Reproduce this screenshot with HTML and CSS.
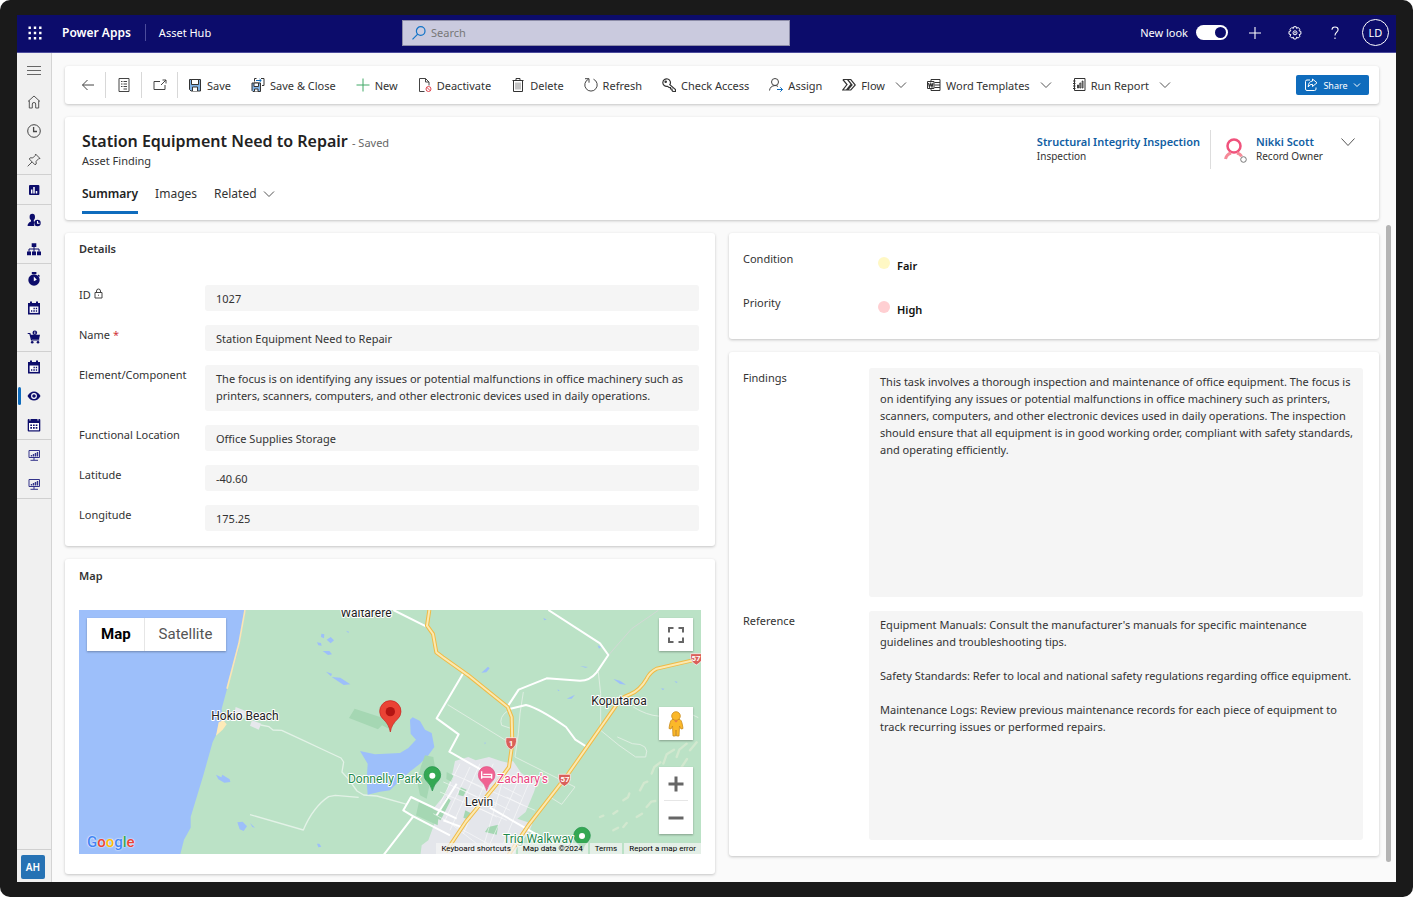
FILE: index.html
```html
<!DOCTYPE html>
<html lang="en">
  <head>
    <meta charset="UTF-8" />
    <meta name="viewport" content="width=device-width, initial-scale=1.0" />
    <title>Asset Hub - Power Apps</title>
    <link rel="stylesheet" href="styles.css">
  </head>
  <body>
    <div class="device">
      <header class="topbar">
        <div class="brand">
          <button class="waffle" aria-label="App launcher">
            <svg width="14" height="14" viewBox="0 0 14 14" fill="#fff">
              <path d="M.5.5h2.400v2.400H.5zM5.800.5h2.400v2.400H5.800zM11.100.5h2.400v2.400h-2.400zM.5 5.800h2.400v2.400H.5zM5.800 5.800h2.400v2.400H5.800zM11.100 5.800h2.400v2.400h-2.400zM.5 11.100h2.400v2.400H.5zM5.800 11.100h2.400v2.400H5.800zM11.100 11.100h2.400v2.400h-2.400z" />
            </svg>
          </button>
          <a class="product" href="#">Power Apps</a>
          <a class="app" href="#">Asset Hub</a>
        </div>
        <div class="search">
          <svg width="14" height="14" viewBox="0 0 14 14" fill="none" stroke="#1173c7" stroke-width="1.2">
            <circle cx="8.700" cy="5" r="4.300" />
            <path d="M5.700 8.200L.5 13.400" />
          </svg>
          <input type="text" placeholder="Search" aria-label="Search" />
        </div>
        <div class="tools">
          <label for="newLook">New look</label>
          <input type="checkbox" id="newLook" class="toggle" checked />
          <button aria-label="Add">
            <svg width="14" height="14" viewBox="0 0 14 14" stroke="#fff" stroke-width="1.1"><path d="M7 1v12M1 7h12" /></svg>
          </button>
          <button aria-label="Settings">
            <svg width="14" height="14" viewBox="0 0 14 14" fill="none" stroke="#fff" stroke-linejoin="round">
              <path d="M5.800 .7h2.400l.4 1.700 1.500-.9 1.900 1.800-1 1.500 1.900.6v2.700l-1.800.5.9 1.600-1.800 1.900-1.600-1-.5 1.900H5.800l-.4-1.800-1.600.9L2 10.300l.9-1.700L1 8.100V5.400l1.900-.5L2 3.300l1.800-1.800 1.600.9z" />
              <circle cx="7" cy="6.800" r="2" />
              <circle cx="7" cy="6.800" r=".4" />
            </svg>
          </button>
          <button aria-label="Help">
            <svg width="10" height="14" viewBox="0 0 10 14" fill="none" stroke="#fff" stroke-width="1.100">
              <path d="M2 3.800C2 2 3.200 1 5 1s3.100 1.100 3.100 2.700C8.100 6 5 6.300 5 9.400" />
              <path d="M5 11.500v1.600" />
            </svg>
          </button>
          <button class="avatar">LD</button>
        </div>
      </header>

      <div class="body">
        <nav class="sidebar">
          <button class="menu" aria-label="Menu">
            <svg width="14" height="10" viewBox="0 0 14 10" stroke="#666"><path d="M0 1.500h14M0 5.500h14M0 9.500h14" /></svg>
          </button>
          <div class="group">
            <a href="#" aria-label="Home"><svg width="14" height="14" viewBox="0 0 14 14" fill="none" stroke="#555"><path d="M1 6.500L7 1l6 5.500M2.300 5.500V13H5.300V9q0-1.500 1.700-1.500T8.700 9v4h3V5.500" /></svg></a>
            <a href="#" aria-label="Recent"><svg width="14" height="14" viewBox="0 0 14 14" fill="none" stroke="#444"><circle cx="7" cy="7" r="6.300" /><path d="M6.600 3v4.500h3.400" stroke-width="1.300" /></svg></a>
            <a href="#" aria-label="Pinned"><svg width="14" height="14" viewBox="0 0 14 14" fill="none" stroke="#555"><path d="M8.500 1l4.500 4.500-1.300.2-2.600 2.600.1 2.700-1.200.8L2.300 6l.9-1.200 2.600.1 2.600-2.600zM5 9L.7 13.300" /></svg></a>
          </div>
          <div class="group">
            <a href="#" aria-label="Dashboards"><svg width="14" height="14" viewBox="0 0 14 14"><rect x="2" y="2" width="10.400" height="10" rx="1" fill="#0c0c6b" /><path d="M4.700 6.500v4M7 4v6.500M9.500 8v2.500" stroke="#fff" stroke-width="1.500" /></svg></a>
          </div>
          <div class="group">
            <a href="#" aria-label="Customers"><svg width="14" height="14" viewBox="0 0 14 14" fill="#0c0c6b"><ellipse cx="5.300" cy="4" rx="2.700" ry="3.300" /><path d="M.6 13q-.2-3 3.400-4.500V6h2.800v2.500l1 .5Q6 11 7.300 13z" /><circle cx="10.500" cy="10" r="3.200" /><path d="M10.500 8v2.200h2" stroke="#fff" stroke-width="1.100" fill="none" /></svg></a>
            <a href="#" aria-label="Hierarchy"><svg width="14" height="14" viewBox="0 0 14 14" fill="#0c0c6b"><path d="M4.700 1.300h4.600v3.600H4.700zM0 9.500h4v3.700H0zM5 9.500h4v3.700H5zM10 9.500h4v3.700h-4z" /><path d="M7 5v5M2 9.800V7h10v2.800" fill="none" stroke="#0c0c6b" /></svg></a>
          </div>
          <div class="group">
            <a href="#" aria-label="Timers"><svg width="14" height="14" viewBox="0 0 14 14" fill="#0c0c6b"><path d="M4.800 0h4.600v2H4.800z" /><circle cx="7" cy="8" r="5.700" /><path d="M11 3l1.500 1.500" stroke="#0c0c6b" stroke-width="1.500" /><path d="M6.800 4.500l3 3.300-3 1.500z" fill="#fff" /></svg></a>
            <a href="#" aria-label="Schedule"><svg width="14" height="14" viewBox="0 0 14 14"><path d="M1 2h2V.6h2V2h4V.6h2V2h2v11.500H1z" fill="#0c0c6b" /><path d="M2.600 5.500h8.800v6.400H2.600z" fill="#fff" /><path d="M6.500 7.500h1.300m1 0h1.300M4 10h1.300m1 0h1.500m1 0h1.300" stroke="#0c0c6b" stroke-width="1.500" /></svg></a>
            <a href="#" aria-label="Orders"><svg width="14" height="14" viewBox="0 0 14 14" fill="#0c0c6b"><path d="M.7 3.500h2.200L4.500 10h7.700" fill="none" stroke="#0c0c6b" stroke-width="1.200" /><path d="M3.400 4.700H13l-1 4.800H4.500z" /><circle cx="7.800" cy="2.800" r="2.300" /><path d="M7.800 1.500v2.600" stroke="#fff" stroke-width=".8" /><circle cx="5.200" cy="12.300" r="1.300" /><circle cx="11" cy="12.300" r="1.300" /></svg></a>
          </div>
          <div class="group">
            <a href="#" aria-label="Calendar"><svg width="14" height="14" viewBox="0 0 14 14"><path d="M1 2h2V.6h2V2h4V.6h2V2h2v11.500H1z" fill="#0c0c6b" /><path d="M2.600 5.500h8.800v6.400H2.600z" fill="#fff" /><path d="M6.500 7.500h1.300m1 0h1.300M4 10h1.300m1 0h1.500m1 0h1.300" stroke="#0c0c6b" stroke-width="1.500" /></svg></a>
            <a href="#" class="current" aria-label="Findings"><svg width="14" height="14" viewBox="0 0 14 14"><path d="M.5 7Q3 2.500 7 2.500T13.500 7Q11 11.500 7 11.500T.5 7z" fill="#0c0c6b" /><circle cx="7" cy="7" r="2.900" fill="#fff" /><circle cx="7" cy="7" r="1.800" fill="#0c0c6b" /></svg></a>
            <a href="#" aria-label="Plans"><svg width="14" height="14" viewBox="0 0 14 14"><rect x=".7" y="1" width="12.600" height="12.500" rx="1" fill="#0c0c6b" /><path d="M2 5h10v7.300H2z" fill="#fff" /><path d="M3 0v2.600M11 0v2.600" stroke="#f0f0f0" /><path d="M3.300 7.300h1.700m1 0h1.700m1 0h1.700M3.300 9.900h1.700m1 0h1.700m1 0h1.700" stroke="#0c0c6b" stroke-width="1.600" /></svg></a>
          </div>
          <div class="group">
            <a href="#" aria-label="Reports"><svg width="14" height="14" viewBox="0 0 14 14" fill="none" stroke="#33338a"><path d="M2 2.500h10.500v7H2zM7 9.500v2.500M3.500 12.300h7.500" /><path d="M4.500 8.500V7M6.500 8.500V6M8.500 8.500V5M10.500 8.500V4" stroke-width="1.400" /></svg></a>
            <a href="#" aria-label="Analytics"><svg width="14" height="14" viewBox="0 0 14 14" fill="none" stroke="#33338a"><path d="M2 2.500h10.500v7H2zM7 9.500v2.500M3.500 12.300h7.500" /><path d="M4.500 8.500V7M6.500 8.500V6M8.500 8.500V5M10.500 8.500V4" stroke-width="1.400" /></svg></a>
          </div>
          <div class="area"><button>AH</button></div>
        </nav>

        <main class="main">
          <div class="card commands">
            <div class="nav-cmds">
              <button aria-label="Back"><svg width="14" height="14" viewBox="0 0 14 14" fill="none" stroke="#444"><path d="M13 7H1.500M6.500 2L1.500 7l5 5" /></svg></button>
              <button aria-label="Record list"><svg width="14" height="14" viewBox="0 0 14 14" fill="none" stroke="#444"><path d="M2 .5h10v13H2zM4 3.500h1.500M6.500 3.500H10M4 6h1.500M6.500 6H10M4 8.500h1.500M6.500 8.500H10M6.500 11H10" /></svg></button>
              <button aria-label="Open in new window"><svg width="14" height="14" viewBox="0 0 14 14" fill="none" stroke="#444"><path d="M7 3.500H1v8h11V7M8 7l5-5M9.500 2H13v3.500" /></svg></button>
            </div>
            <div class="record-cmds">
              <button><svg width="14" height="14" viewBox="0 0 14 14" fill="none" stroke="#333"><path d="M1.500 1.500h11v11.500H3L1.500 11.500z" fill="#81b3e6" /><path d="M3.500 1.500h7v5h-7z" fill="#fff" /><path d="M4.500 13V9h5v4" fill="#fff" /></svg>Save</button>
              <button><svg width="14" height="14" viewBox="0 0 14 14" fill="none" stroke="#333"><path d="M1 5h8.500v8.500H2L1 12.500z" fill="#81b3e6" /><path d="M3 5h4.500v3.500H3zM3.500 13.500v-2.500h3.500v2.500" fill="#fff" /><path d="M3.500 3.500v-3h2M10 .5h3v7h-2" /><path d="M5 2.500h5M8.500 1l1.800 1.500L8.500 4" stroke="#0f6cbd" /></svg>Save &amp; Close</button>
              <button><svg width="14" height="14" viewBox="0 0 14 14" stroke="#41a866"><path d="M7 .5v13M.5 7h13" /></svg>New</button>
              <button><svg width="14" height="14" viewBox="0 0 14 14" fill="none" stroke="#444"><path d="M6.500 13.500H1.500v-13h6l3.500 3.500v3.500M7.500.5V4H11" /><g stroke="#e0454f"><circle cx="10.500" cy="11" r="2.500" /><path d="M8.800 9.300l3.400 3.400" /></g></svg>Deactivate</button>
              <button><svg width="14" height="14" viewBox="0 0 14 14" fill="none" stroke="#333"><path d="M1.500 2.500h11M5 2.500v-2h4v2M2.500 2.500v11h9v-11" /><path d="M5 4.500v7M7 4.500v7M9 4.500v7" stroke="#888" /></svg>Delete</button>
              <button><svg width="14" height="14" viewBox="0 0 14 14" fill="none" stroke="#444"><path d="M9.500 1.200A6.200 6.200 0 1 1 4.500 1.200M1 .7h4v4" /></svg>Refresh</button>
              <button><svg width="14" height="14" viewBox="0 0 14 14" fill="none" stroke="#333" stroke-width="1.200"><path d="M7.800 6.700A3.800 3.800 0 1 0 5.500 8.300L7 9.500h1.500V11H10v1.500l1 1h2.500v-2z" /><circle cx="3.700" cy="3.800" r=".7" /></svg>Check Access</button>
              <button><svg width="14" height="14" viewBox="0 0 14 14" fill="none" stroke="#444"><circle cx="6" cy="4" r="3.500" /><path d="M.5 12.500Q1 8 6 7.500q2 0 3 1" /><path d="M8 11.500h5.500M11.300 9.300l2.200 2.200-2.200 2.200" stroke="#0f6cbd" /></svg>Assign</button>
              <button><svg width="14" height="14" viewBox="0 0 14 14" fill="none" stroke="#333" stroke-width="1.200"><path d="M.8 1.500h8l4.500 5.500-4.500 5H5.500L10 7 5.500 1.500M.8 1.500L5 6.500l-4.200 5.500h3.700L9 6.500" /></svg>Flow<svg class="chev" width="12" height="12" viewBox="0 0 12 12"><path d="M1 3.500l5 5 5-5" /></svg></button>
              <button><svg width="14" height="14" viewBox="0 0 14 14" fill="none" stroke="#333"><path d="M4 3.500v-2h9v11H4v-2M7.500 4.500H13M7.500 7H13M7.500 9.500H13" /><path d="M.5 3.500h6.500v7H.5z" /><path d="M1.500 5l1 4 1.300-3.500L5 9l1-4" stroke-width="1.200" /></svg>Word Templates<svg class="chev" width="12" height="12" viewBox="0 0 12 12"><path d="M1 3.500l5 5 5-5" /></svg></button>
              <button><svg width="14" height="14" viewBox="0 0 14 14" fill="none" stroke="#333"><path d="M2.500.5h10.500v12H2.500zM1 3h2.500M1 5.500h2.500M1 8h2.500M1 10.500h2.500" /><path d="M5.500 10V7h1v3zM7.800 10V5h1v5zM10.200 10V3h.8v7z" stroke-width=".9" /></svg>Run Report<svg class="chev" width="12" height="12" viewBox="0 0 12 12"><path d="M1 3.500l5 5 5-5" /></svg></button>
            </div>
            <button class="share"><svg width="14" height="14" viewBox="0 0 14 14" fill="none" stroke="#fff" stroke-linejoin="round"><path d="M6 2H3Q1.500 2 1.500 3.500v7.500Q1.500 12.500 3 12.500h7.500q1.500 0 1.500-1.500v-1.500" /><path d="M8.500 1l4.500 3.800L8.500 8.500V6.300Q5.500 6 4.200 9 4.300 3.500 8.500 3z" /></svg>Share<svg width="8" height="8" viewBox="0 0 8 8" fill="none" stroke="#fff"><path d="M1 2.500l3 3 3-3" /></svg></button>
          </div>

          <section class="card record">
            <div class="record-top">
              <div class="record-title">
                <h1>Station Equipment Need to Repair <small>- Saved</small></h1>
                <p>Asset Finding</p>
              </div>
              <div class="lookup">
                <a href="#">Structural Integrity Inspection</a>
                <span>Inspection</span>
              </div>
              <div class="owner">
                <svg width="26" height="28" viewBox="0 0 26 28" fill="none">
                  <circle cx="12" cy="9" r="6.500" stroke="#f0527c" stroke-width="2.500" />
                  <path d="M3.500 22q1-4.500 5.500-6M15 16q3.500 1 4.500 3.500" stroke="#f58a98" stroke-width="3" />
                  <circle cx="21.500" cy="22.500" r="2.800" fill="#fff" stroke="#777" />
                </svg>
                <div class="lookup">
                  <a href="#">Nikki Scott</a>
                  <span>Record Owner</span>
                </div>
              </div>
              <button class="expand" aria-label="Expand header"><svg class="chev" width="14" height="14" viewBox="0 0 14 14"><path d="M.5 3.500l6.500 7 6.500-7" /></svg></button>
            </div>
            <div class="tabs">
              <button class="active">Summary</button>
              <button>Images</button>
              <button>Related<svg class="chev" width="12" height="12" viewBox="0 0 12 12"><path d="M1 3.500l5 5 5-5" /></svg></button>
            </div>
          </section>

          <div class="form">
            <div class="column">
              <section class="card details">
                <h2>Details</h2>
                <div class="fields">
                  <label for="assetId">ID <svg width="9" height="11" viewBox="0 0 9 11" fill="none" stroke="#444"><path d="M1 4.500h7v5.500H1zM2.500 4.500V3q0-2 2-2t2 2v1.500" /><path d="M4 7.200h1" /></svg></label>
                  <input type="text" id="assetId" value="1027" readonly />
                  <label for="assetName">Name <span class="req">*</span></label>
                  <input type="text" id="assetName" value="Station Equipment Need to Repair" />
                  <label for="element">Element/Component</label>
                  <textarea id="element" class="short">The focus is on identifying any issues or potential malfunctions in office machinery such as printers, scanners, computers, and other electronic devices used in daily operations.</textarea>
                  <label for="location">Functional Location</label>
                  <input type="text" id="location" value="Office Supplies Storage" />
                  <label for="lat">Latitude</label>
                  <input type="text" id="lat" value="-40.60" />
                  <label for="lng">Longitude</label>
                  <input type="text" id="lng" value="175.25" />
                </div>
              </section>

              <section class="card map-card">
                <h2>Map</h2>
                <div class="map">
                  <svg class="map-canvas" viewBox="0 0 622 244" preserveAspectRatio="xMidYMid slice">
                    <rect width="622" height="244" fill="#bbe2c6" />
                    <!-- shapes are drawn at three times the map scale -->
                    <g transform="scale(.333333)">
                      <g transform="translate(-27 -29)">
                        <path d="M0 0H532L505 150 470 270 455 325 458 365 440 400 428 425 400 525 362 650 362 682 342 718 330 765H0z" fill="#9dbffa" />
                        <path d="M525 29l-18 100-36 136" fill="none" stroke="#fae6b4" stroke-width="5" />
                        <path d="M446 366l14-6 10 12-12 16-20 18z" fill="#fdeab8" />
                        <path d="M497 320l30 12-3 22-32-8zM546 360l28 10-8 18-26-12z" fill="#e6e8ec" />
                        <g fill="#9dbffa">
                          <path d="M754 100l9 2-1 12-9-4zM770 118l12-8 10 10-10 9zM741 126l12 2 2 8-10-1zM758 152l20 0 8 10-12 2zM768 214l18 6-3 8zM785 230l26 2 30 20-20 2zM828 91l9 3-2 4z" />
                          <path d="M438 523l16 8 3-8 22 14 2 8-18 2-18-10zM502 666l16-2 13 14-10 14-12-5zM540 668l15 14-8-2zM741 730h7l6 9-9 2z" />
                        </g>
                        <path d="M854 325l74 24 50 18-22 18-20-10-12 12-87-34z" fill="#a5d7b3" />
                        <g fill="none" stroke="#e3f2e7" stroke-width="4" stroke-linejoin="round">
                          <path d="M572 374l25 5 12 10 26 1 60 28 60 28 58 27 8 12-5 30 20 22 25 35 20 12 40 3 90 25" />
                          <path d="M540 643l160 46q30-70 76-100l20-4 70 6" />
                        </g>
                      </g>
                      <g transform="translate(903 -29)">
                        <path d="M-60 452L-15 462 60 458 85 443 108 418 92 400 90 358 98 351 120 362 135 388 155 398 163 440 145 465 120 490 95 510 55 545 30 570 0 574-37 583-40 540-37 490z" fill="#9dbffa" />
                        <path d="M135 465l25 5 5 30-10 25-15 70-20-10-8-40 10-45z" fill="#a5d7b3" />
                        <path d="M225 482l40-12 22 10 40-10 35 12 22 5 15-5 14 20 10 15 25 18 24 10-10 30-25 60-25 20 45 15-10 25-30 40-30 50H150l-30-10 5-40 20-15 22-60-20-20 50-60 20-60z" fill="#e4e6eb" />
                        <path d="M200 590l12 10-30 60-15-8zM117 605l60 30-4 40-65-30zM325 680l30-7-5 30-35-8zM240 560l20 8-10 20-15-4zM256 630l20 10-6 20-20-8zM200 515l22 12-8 18-15-9z" fill="#a5d7b3" />
                        <g fill="none" stroke="#d2e8cf" stroke-width="7" stroke-linecap="round">
                          <path d="M700 640l12-8M730 600l14-9 4-12M780 570l12-22 10-4M815 520l8-20 18-14M850 490l10-28 22-14M890 470l8-22 22-18M860 540l12-20M905 500l16-24M930 450l20-24M800 620l14-16 12-2M840 600l10-24M770 650l16-10M700 690l14-8M730 680l10-12M920 550l14-22M895 590l10-20M660 650l10-4" />
                        </g>
                        <g stroke="#fff" stroke-width="2" opacity=".8">
                          <path d="M190 545l160 70M180 575l200 85M215 520l250 110M160 640l200 110M240 490l-60 120M270 500l-75 160M300 490l-90 200M340 490l-90 210M380 500l-70 240M420 530l-90 200M450 540l-80 190M200 660l90 70" />
                          <path d="M230 560l60 30M260 540l70 35M290 620l60 30M330 600l60 30M370 560l55 28M380 590l50 25" />
                        </g>
                        <g fill="none" stroke="#dfeee2" stroke-width="3">
                          <path d="M203 313l195 120M430 275l-10 65-5 60-10 70 180 90-40 52-40-25M655 215l7 65v110l55 45 50 35 30 0q15-40-40-40l-45-20M385 330q-30 20-20 45l30 10M760 320q80 50 150 10l45 22" />
                          <path d="M835 30l-80 55-70 80" stroke="#d2d8d5" />
                        </g>
                        <g fill="#9dbffa"><path d="M304 217l20-18 5 5-10 12zM700 236l20 5 18 12-18-2zM600 197l24 3-8 2zM490 52l10 6-7 2zM653 135l10 5-6 5zM560 295l25-12-10 12zM843 264l10 1-4 5zM883 242l10 3-4 3zM314 426l4 2-4 4zM533 267l6 4-5 1z" /></g>
                        <g fill="none" stroke="#fff" stroke-width="6" stroke-linejoin="round">
                          <path d="M40 29l98 49M250 218l-80 136 66 48-28 52 95 54 37 30M505 29l155 100 25 35-35 52q-20 25-50 25l-100-7-84 34-33 50M385 327l53-13q40 10 120 66l28 38 38 24" />
                          <path d="M10 765l90-117-30-18 23-40 137 65M100 648l110 57M330 622l130 75 60 30M230 550l-60 95M190 660l60 22" />
                        </g>
                        <g fill="none" stroke-linejoin="round">
                          <path d="M148 29l-7 47 18 25 10 55 20 15 76 54 118 95 12 30 2 80-10 70-40 55-90 110-60 90M960 175l-130 30q-20 10-30 30-20 35-50 47-30 10-45 38L565 520l-120 155-60 90" stroke="#f0ba45" stroke-width="12" />
                          <path d="M148 29l-7 47 18 25 10 55 20 15 76 54 118 95 12 30 2 80-10 70-40 55-90 110-60 90M960 175l-130 30q-20 10-30 30-20 35-50 47-30 10-45 38L565 520l-120 155-60 90" stroke="#fbe9b0" stroke-width="6" />
                        </g>
                        <g fill="#d9605a" stroke="#fff" stroke-width="2">
                          <path d="M378 412h31q4 26-16 36-20-10-15-36z" />
                          <path d="M536 522h35q4 26-18 36-21-10-17-36z" />
                          <path d="M932 160h35q4 24-18 34-21-10-17-34z" />
                        </g>
                        <path d="M31 395Q27 372 10 357a32 32 0 1 1 42 0Q35 372 31 395z" fill="#ea4335" stroke="#c5221f" stroke-width="2" />
                        <circle cx="31" cy="334" r="14" fill="#b31412" />
                        <g fill="#34a853" stroke="#23904b" stroke-width="2">
                          <path d="M157 572Q152 552 138 540a25 25 0 1 1 38 0Q162 552 157 572z" />
                          <path d="M606 755Q602 735 587 722a25 25 0 1 1 38 0Q610 735 606 755z" />
                        </g>
                        <circle cx="157" cy="526" r="9" fill="#fff" /><circle cx="606" cy="707" r="9" fill="#fff" />
                        <path d="M320 571Q316 552 301 540a25 25 0 1 1 38 0Q324 552 320 571z" fill="#f06292" stroke="#e04f83" stroke-width="2" />
                        <path d="M305 513v22M305 530h30v5M310 522h25v8" fill="none" stroke="#fff" stroke-width="4" />
                      </g>
                    </g>
                    <g class="places">
                      <text x="287" y="7" text-anchor="middle">Waitarere</text>
                      <text x="166" y="110" text-anchor="middle">Hokio Beach</text>
                      <text x="540" y="95" text-anchor="middle">Koputaroa</text>
                      <text x="400" y="196" text-anchor="middle">Levin</text>
                      <text x="342" y="173" text-anchor="end" class="park">Donnelly Park</text>
                      <text x="424" y="233" class="park">Trig Walkway</text>
                      <text x="418" y="173" class="hotel">Zachary's</text>
                    </g>
                    <g class="shields">
                      <text x="432" y="136">1</text>
                      <text x="486" y="172">57</text>
                      <text x="617" y="51">57</text>
                    </g>
                  </svg>
                  <div class="map-types">
                    <button class="on">Map</button>
                    <button>Satellite</button>
                  </div>
                  <button class="map-btn fullscreen" aria-label="Full screen"><svg width="16" height="16" viewBox="0 0 16 16" fill="none" stroke="#666" stroke-width="2"><path d="M1 5.500V1h4.500M10.500 1H15v4.500M15 10.500V15h-4.500M5.500 15H1v-4.500" /></svg></button>
                  <button class="map-btn pegman" aria-label="Street View"><svg width="16" height="26" viewBox="0 0 16 26" fill="#fbb829" stroke="#c98a1b" stroke-width=".8"><path d="M4 8.500h8q2 1 3 9l-2 .5-1.500-3-.5 10H8.500L8 19l-.5 6H5l-.5-10L3 18l-2-.5q1-8 3-9z" /><circle cx="8" cy="5" r="4.300" /><path d="M6 9.500l2 2 2-2z" fill="#e8744f" stroke="none" /></svg></button>
                  <div class="zoom">
                    <button aria-label="Zoom in"><svg width="16" height="16" viewBox="0 0 16 16" stroke="#666" stroke-width="3"><path d="M8 .5v15M.5 8h15" /></svg></button>
                    <button aria-label="Zoom out"><svg width="16" height="16" viewBox="0 0 16 16" stroke="#666" stroke-width="3"><path d="M.5 8h15" /></svg></button>
                  </div>
                  <div class="google"><i class="b">G</i><i class="r">o</i><i class="y">o</i><i class="b">g</i><i class="g">l</i><i class="r">e</i></div>
                  <div class="attribution">
                    <a href="#">Keyboard shortcuts</a>
                    <span>Map data ©2024</span>
                    <a href="#">Terms</a>
                    <a href="#">Report a map error</a>
                  </div>
                </div>
              </section>
            </div>

            <div class="column">
              <section class="card status">
                <div class="status-row">
                  <span>Condition</span>
                  <b class="fair">Fair</b>
                </div>
                <div class="status-row">
                  <span>Priority</span>
                  <b class="high">High</b>
                </div>
              </section>
              <section class="card notes">
                <div class="fields">
                  <label for="findings">Findings</label>
                  <textarea id="findings">This task involves a thorough inspection and maintenance of office equipment. The focus is on identifying any issues or potential malfunctions in office machinery such as printers, scanners, computers, and other electronic devices used in daily operations. The inspection should ensure that all equipment is in good working order, compliant with safety standards, and operating efficiently.</textarea>
                  <label for="reference">Reference</label>
                  <textarea id="reference">Equipment Manuals: Consult the manufacturer's manuals for specific maintenance guidelines and troubleshooting tips.

Safety Standards: Refer to local and national safety regulations regarding office equipment.

Maintenance Logs: Review previous maintenance records for each piece of equipment to track recurring issues or performed repairs.</textarea>
                </div>
              </section>
            </div>
            <div class="scrollbar"></div>
          </div>
        </main>
      </div>
    </div>
  </body>
</html>
```

FILE: styles.css
```css
* {
  box-sizing: border-box;
}
body {
  margin: 0;
  background: #fff;
  font: 11px/17px "Noto Sans", "Open Sans", sans-serif;
  color: #333;
}
button,
input,
textarea {
  margin: 0;
  padding: 0;
  border: 0;
  background: none;
  font: inherit;
  color: inherit;
}
a {
  color: inherit;
  text-decoration: none;
}
h1,
h2,
p {
  margin: 0;
}
svg {
  display: block;
  flex: none;
}
.device {
  display: flex;
  flex-direction: column;
  min-height: 100vh;
  padding: 15px 17px;
  background: #1a1a1a;
  border-radius: 10px;
}

/* top bar */
.topbar {
  display: flex;
  align-items: center;
  height: 38px;
  padding-bottom: 2px;
  background: #0c0c6b;
  border-bottom: 1px solid #4c4c9c;
  color: #fff;
}
.brand {
  display: flex;
  align-items: center;
  width: 385px;
}
.waffle {
  padding: 0 20px 0 11px;
}
.product {
  padding-right: 14px;
  border-right: 1px solid #4c4c9c;
  font-size: 12px;
  font-weight: 600;
}
.app {
  padding-left: 13px;
}
.search {
  display: flex;
  align-items: center;
  gap: 5px;
  width: 388px;
  height: 26px;
  padding: 0 9px;
  background: #cacade;
  border: 1px solid #8c8ca8;
}
.search input {
  flex: 1;
}
.search input::placeholder {
  color: #777;
}
.tools {
  display: flex;
  align-items: center;
  margin-left: auto;
  padding-right: 7px;
}
.tools button {
  display: flex;
  justify-content: center;
  width: 40px;
}
.tools .toggle {
  appearance: none;
  display: flex;
  align-items: center;
  justify-content: flex-end;
  width: 32px;
  height: 15px;
  margin: 0 7px 0 8px;
  padding: 2px;
  border-radius: 8px;
  background: #fff;
}
.toggle::before {
  content: "";
  width: 11px;
  height: 11px;
  border-radius: 50%;
  background: #0c0c6b;
}
.tools .avatar {
  align-items: center;
  width: 27px;
  height: 27px;
  margin-left: 7px;
  border: 1px solid #fff;
  border-radius: 50%;
}

/* left navigation */
.body {
  flex: 1;
  display: flex;
  background: #fafafa;
}
.sidebar {
  display: flex;
  flex-direction: column;
  width: 35px;
  background: #f0f0f0;
  border-right: 1px solid #d4d4d4;
}
.menu {
  display: flex;
  align-items: center;
  justify-content: center;
  height: 34px;
}
.group {
  border-bottom: 1px solid #d0d0d0;
}
.group a {
  display: flex;
  align-items: center;
  justify-content: center;
  height: 29px;
}
.group .current {
  position: relative;
}
.current::before {
  content: "";
  position: absolute;
  left: 1px;
  width: 3px;
  height: 18px;
  border-radius: 2px;
  background: #0f6cbd;
}
.area {
  margin-top: auto;
  padding: 5px 4px 3px;
  border-top: 1px solid #d0d0d0;
}
.area button {
  width: 24px;
  height: 24px;
  border-radius: 2px;
  background: #2672b4;
  color: #fff;
  font-size: 10px;
  font-weight: 600;
}

/* content */
.main {
  flex: 1;
  display: flex;
  flex-direction: column;
  gap: 13px;
  min-width: 0;
  padding: 13px 17px 8px 13px;
}
.card {
  background: #fff;
  border-radius: 3px;
  box-shadow: 0 1px 3px rgba(0, 0, 0, 0.22);
}
.chev {
  fill: none;
  stroke: #555;
}
.commands {
  display: flex;
  align-items: center;
  height: 38px;
  padding-right: 10px;
}
.nav-cmds {
  display: flex;
  padding-left: 5px;
}
.nav-cmds button {
  display: flex;
  align-items: center;
  justify-content: center;
  width: 36px;
  height: 26px;
  border-right: 1px solid #d8d8d8;
}
.record-cmds {
  display: flex;
  gap: 20px;
  padding-left: 10px;
}
.record-cmds button {
  display: flex;
  align-items: center;
  gap: 5px;
  white-space: nowrap;
}
.record-cmds .chev {
  margin-left: 5px;
}
.share {
  display: flex;
  align-items: center;
  justify-content: center;
  gap: 5px;
  width: 73px;
  height: 20px;
  margin-left: auto;
  border-radius: 2px;
  background: #0f6cbd;
  color: #fff;
  font-size: 9px;
}

/* record header */
.record {
  padding: 13px 24px 6px 17px;
}
.record-top {
  display: flex;
}
.record-title {
  flex: 1;
}
.record-title h1 {
  font-size: 16px;
  line-height: 22px;
  font-weight: 600;
  color: #222;
}
.record-title small {
  font-size: 11px;
  line-height: 1;
  font-weight: 400;
  color: #666;
}
.lookup {
  display: flex;
  flex-direction: column;
  padding-top: 4px;
  line-height: 15px;
}
.lookup a {
  color: #115ea3;
  font-weight: 600;
}
.lookup span {
  font-size: 10px;
}
.owner {
  display: flex;
  gap: 8px;
  margin-left: 10px;
  padding-left: 11px;
  border-left: 1px solid #ddd;
}
.owner > svg {
  margin-top: 7px;
}
.expand {
  align-self: flex-start;
  margin: 5px 0 0 18px;
}
.tabs {
  display: flex;
  gap: 17px;
  margin-top: 15px;
  font-size: 12px;
}
.tabs button {
  display: flex;
  align-items: center;
  gap: 6px;
  height: 30px;
  padding-bottom: 8px;
  border-bottom: 3px solid transparent;
}
.tabs .active {
  border-color: #0f6cbd;
  font-weight: 600;
  color: #222;
}

/* form */
.form {
  position: relative;
  display: grid;
  grid-template-columns: 1fr 1fr;
  gap: 14px;
  align-items: start;
}
.column {
  display: flex;
  flex-direction: column;
  gap: 13px;
  min-width: 0;
}
.form h2 {
  font-size: 11px;
  line-height: 17px;
  font-weight: 600;
}
.details {
  padding: 7px 16px 15px 14px;
}
.fields {
  display: grid;
  grid-template-columns: 126px 1fr;
  row-gap: 14px;
}
.details .fields {
  margin-top: 28px;
}
.fields label {
  padding-top: 1px;
}
.fields label svg {
  display: inline-block;
}
.req {
  color: #d13438;
}
.fields input {
  height: 26px;
}
.fields input,
.fields textarea {
  width: 100%;
  padding: 0 11px;
  border-radius: 3px;
  background: #f5f5f5;
}
.fields textarea {
  display: block;
  height: 229px;
  padding: 5px 6px 5px 11px;
  resize: none;
  overflow: hidden;
}
.fields .short {
  height: 46px;
}
.status {
  padding: 9px 14px;
}
.status-row {
  display: grid;
  grid-template-columns: 135px 1fr;
  height: 44px;
  padding-top: 8px;
}
.status-row b {
  display: flex;
  gap: 7px;
  padding-top: 7px;
  font-weight: 600;
  color: #111;
}
.status-row b::before {
  content: "";
  width: 12px;
  height: 12px;
  border-radius: 50%;
}
.fair::before {
  background: #fff8c4;
}
.high::before {
  background: #ffcfd2;
}
.notes {
  padding: 16px 16px 16px 14px;
}
.scrollbar {
  position: absolute;
  top: -8px;
  right: -12px;
  bottom: 12px;
  width: 5px;
  border-radius: 3px;
  background: #b4b4b4;
}

/* map */
.map-card {
  padding: 8px 14px 20px;
}
.map {
  position: relative;
  margin-top: 26px;
  height: 244px;
  overflow: hidden;
  font-family: Roboto, sans-serif;
}
.map-canvas {
  width: 100%;
  height: 100%;
}
.places text {
  font-size: 12px;
  fill: #222;
  stroke: #fff;
  stroke-width: 2px;
  stroke-linejoin: round;
  paint-order: stroke;
}
.places .park {
  fill: #1f8a4c;
}
.places .hotel {
  fill: #e8467f;
}
.shields text {
  font-size: 8px;
  font-weight: 700;
  fill: #fff;
  text-anchor: middle;
}
.map-types {
  position: absolute;
  top: 8px;
  left: 8px;
  display: flex;
  height: 33px;
  background: #fff;
  box-shadow: 0 1px 2px rgba(0, 0, 0, 0.3);
  font-size: 15px;
}
.map-types button {
  padding: 0 14px;
  color: #555;
}
.map-types .on {
  padding-right: 13px;
  border-right: 1px solid #e6e6e6;
  font-weight: 700;
  color: #000;
}
.map-btn,
.zoom {
  position: absolute;
  right: 8px;
  display: flex;
  align-items: center;
  justify-content: center;
  width: 34px;
  height: 33px;
  background: #fff;
  box-shadow: 0 1px 2px rgba(0, 0, 0, 0.3);
}
.fullscreen {
  top: 8px;
}
.pegman {
  top: 97px;
}
.zoom {
  top: 157px;
  flex-direction: column;
  height: 67px;
  padding: 0 5px;
}
.zoom button {
  flex: 1;
  display: flex;
  align-items: center;
  justify-content: center;
  width: 100%;
}
.zoom button + button {
  border-top: 1px solid #e6e6e6;
}
.google {
  position: absolute;
  left: 8px;
  bottom: 3px;
  font-size: 15px;
  font-weight: 500;
  text-shadow: 0 0 1px #fff, 0 0 2px #fff;
}
.google i {
  font-style: normal;
}
.google .b {
  color: #4285f4;
}
.google .r {
  color: #ea4335;
}
.google .y {
  color: #fbbc05;
}
.google .g {
  color: #34a853;
}
.attribution {
  position: absolute;
  right: 0;
  bottom: 0;
  display: flex;
  gap: 2px;
  font-size: 8px;
  line-height: 11px;
  color: #000;
}
.attribution > * {
  padding: 0 5px;
  background: rgba(245, 245, 245, 0.7);
}
```
